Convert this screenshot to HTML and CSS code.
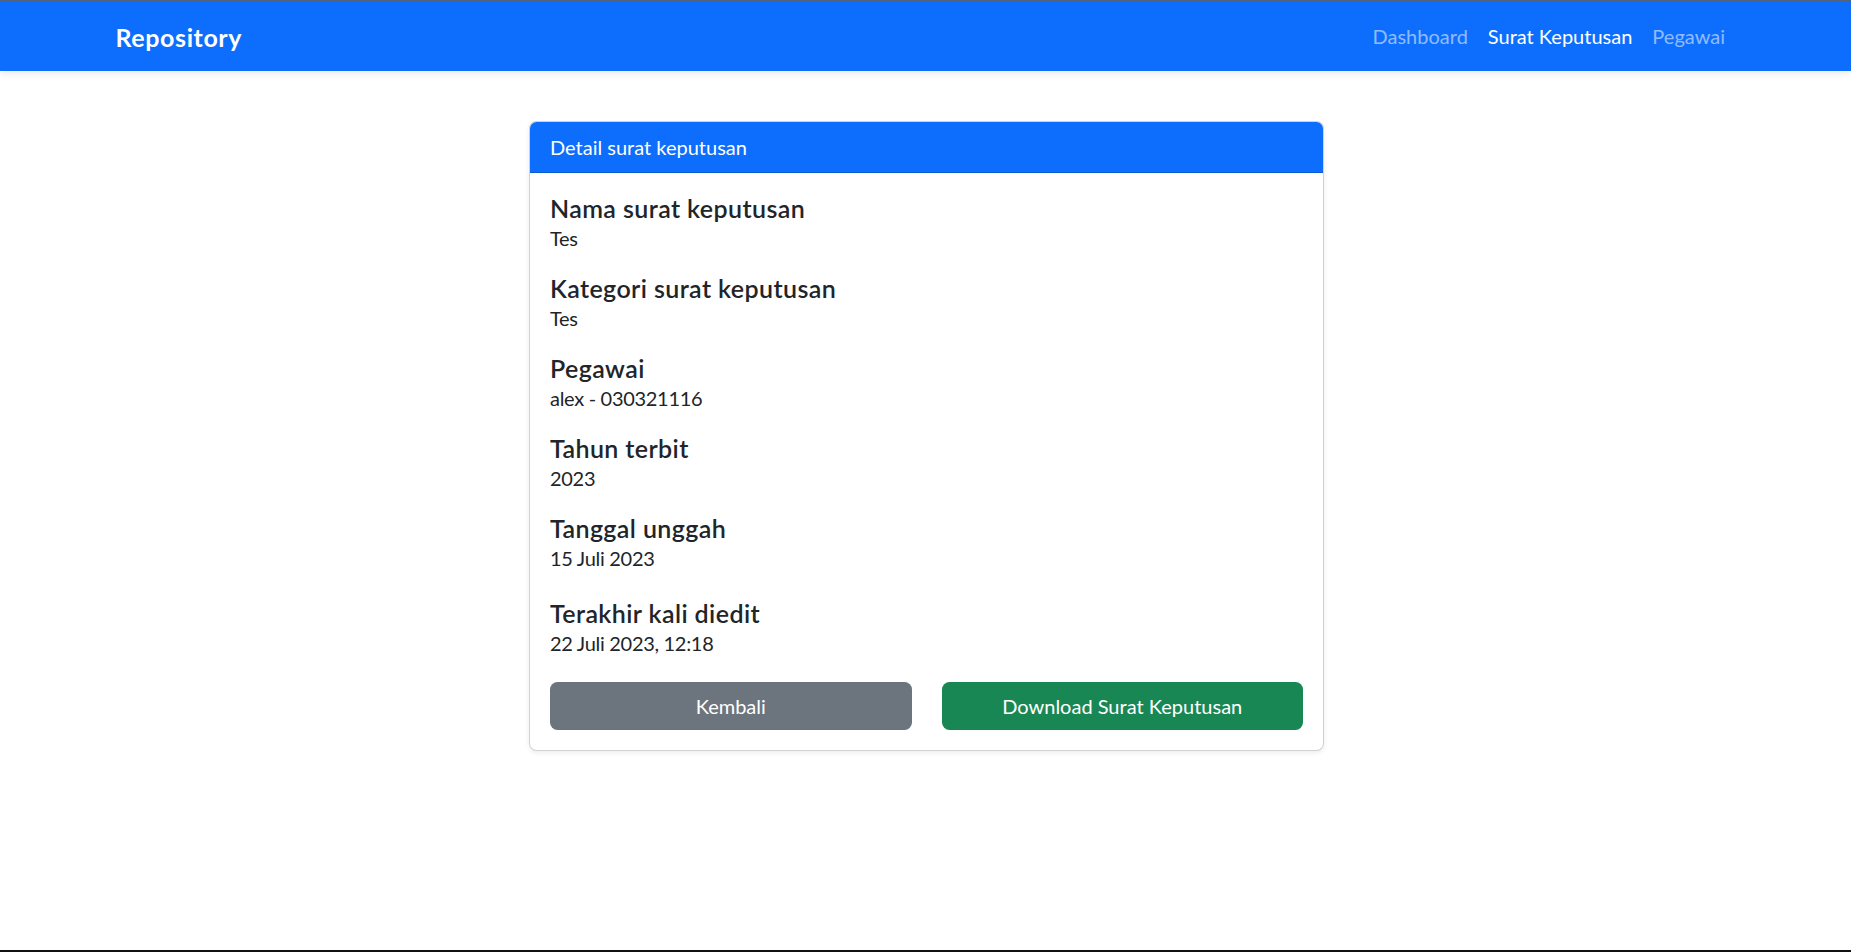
FILE: index.html
```html
<!DOCTYPE html>
<html lang="id">
<head>
<meta charset="utf-8">
<title>Repository</title>
<link rel="stylesheet" href="styles.css">
</head>
<body>
<div class="page">
  <nav class="navbar">
    <a class="brand" href="#">Repository</a>
    <ul class="nav">
      <li><a class="nav-link" href="#">Dashboard</a></li>
      <li><a class="nav-link active" href="#">Surat Keputusan</a></li>
      <li><a class="nav-link" href="#">Pegawai</a></li>
    </ul>
  </nav>
  <main class="main">
    <section class="card">
      <div class="card-header">Detail surat keputusan</div>
      <div class="card-body">
        <div class="field">
          <h5 class="label">Nama surat keputusan</h5>
          <p class="value">Tes</p>
        </div>
        <div class="field">
          <h5 class="label">Kategori surat keputusan</h5>
          <p class="value">Tes</p>
        </div>
        <div class="field">
          <h5 class="label">Pegawai</h5>
          <p class="value">alex - 030321116</p>
        </div>
        <div class="field">
          <h5 class="label">Tahun terbit</h5>
          <p class="value">2023</p>
        </div>
        <div class="field">
          <h5 class="label">Tanggal unggah</h5>
          <p class="value">15 Juli 2023</p>
        </div>
        <div class="field field-last">
          <h5 class="label">Terakhir kali diedit</h5>
          <p class="value">22 Juli 2023, 12:18</p>
        </div>
        <div class="actions">
          <a class="btn btn-secondary" href="#">Kembali</a>
          <a class="btn btn-success" href="#">Download Surat Keputusan</a>
        </div>
      </div>
    </section>
  </main>
  <div class="bottom-bar"></div>
</div>
</body>
</html>
```
FILE: styles.css
```css
* { box-sizing: border-box; }
html, body { margin: 0; padding: 0; }
body {
  font-family: Lato, "Open Sans", "Liberation Sans", sans-serif;
  font-size: 20px;
  line-height: 1.5;
  color: #212529;
  background: #fff;
}
.page {
  min-height: 100vh;
  display: flex;
  flex-direction: column;
  border-top: 1px solid #56657a;
}
.navbar {
  height: 70px;
  background: #0d6efd;
  display: flex;
  align-items: center;
  justify-content: space-between;
  padding: 0 116px 0 115.5px;
  box-shadow: 0 3px 7px rgba(0, 0, 0, 0.08);
  position: relative;
  z-index: 1;
}
.brand {
  color: #fff;
  font-weight: 700;
  font-size: 25px;
  line-height: 37px;
  padding-top: 2px;
  letter-spacing: 0.6px;
  text-decoration: none;
}
.nav {
  list-style: none;
  margin: 0;
  padding: 0;
  display: flex;
}
.nav-link {
  display: block;
  padding: 10px 10px;
  font-size: 20px;
  line-height: 30px;
  color: rgba(255, 255, 255, 0.55);
  text-decoration: none;
}
.nav-link.active { color: #fff; }
.main {
  flex: 1;
  padding: 50px 0 0 2px;
}
.card {
  width: 795px;
  margin: 0 auto;
  border: 1px solid rgba(0, 0, 0, 0.175);
  border-radius: 7.5px;
  box-shadow: 0 2px 5px rgba(0, 0, 0, 0.075);
  overflow: hidden;
  background: #fff;
}
.card-header {
  background: #0d6efd;
  color: #fff;
  padding: 10px 20px;
  line-height: 30px;
  font-size: 20px;
  border-bottom: 1px solid rgba(0, 0, 0, 0.175);
}
.card-body {
  padding: 20px;
}
.field { margin-bottom: 20px; }
.field-last { margin-top: 25px; margin-bottom: 24px; }
.label {
  margin: 0;
  font-size: 25px;
  font-weight: 600;
  line-height: 30px;
  letter-spacing: 0.4px;
}
.value {
  margin: 0;
  font-size: 20px;
  line-height: 30px;
  letter-spacing: -0.3px;
}
.actions {
  display: grid;
  grid-template-columns: 1fr 1fr;
  column-gap: 30px;
}
.btn {
  display: flex;
  align-items: center;
  justify-content: center;
  height: 47.5px;
  border-radius: 7.5px;
  color: #fff;
  text-decoration: none;
  font-size: 20px;
}
.btn-secondary { background: #6c757d; }
.btn-success { background: #198754; }
.bottom-bar {
  height: 2px;
  background: #111;
}
```
